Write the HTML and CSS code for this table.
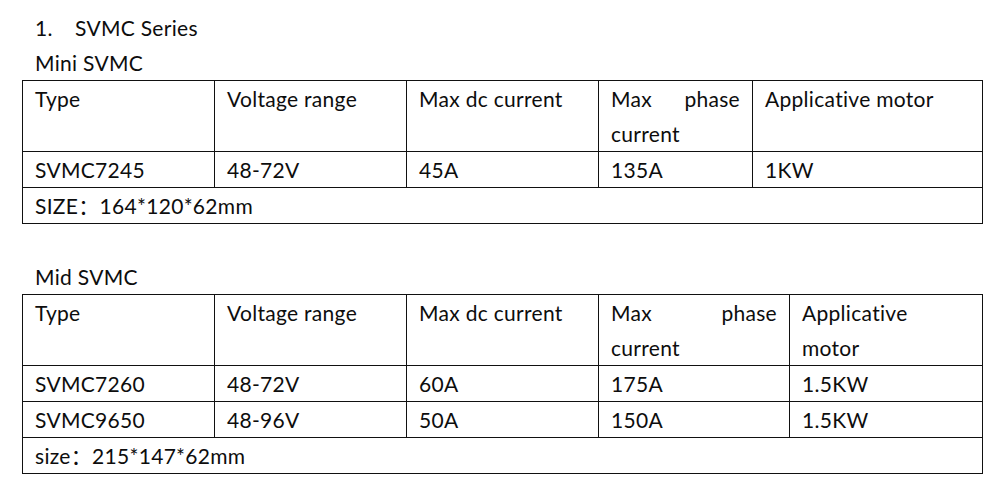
FILE: index.html
```html
<!DOCTYPE html>
<html lang="en">
<head>
    <meta charset="UTF-8">
    <title>SVMC Series</title>
    <link rel="stylesheet" href="styles.css">
</head>
<body>
    <div class="doc">
        <p class="para heading"><span class="num">1.</span>SVMC Series</p>
        <p class="para">Mini SVMC</p>
        <table class="spec">
            <colgroup>
                <col style="width: 192px">
                <col style="width: 192px">
                <col style="width: 192px">
                <col style="width: 154px">
                <col style="width: 230px">
            </colgroup>
            <tr>
                <td>Type</td>
                <td>Voltage range</td>
                <td>Max dc current</td>
                <td class="justify">Max phase current</td>
                <td>Applicative motor</td>
            </tr>
            <tr>
                <td>SVMC7245</td>
                <td>48-72V</td>
                <td>45A</td>
                <td>135A</td>
                <td>1KW</td>
            </tr>
            <tr>
                <td colspan="5">SIZE：164*120*62mm</td>
            </tr>
        </table>

        <p class="para">&nbsp;</p>
        <p class="para">Mid SVMC</p>
        <table class="spec">
            <colgroup>
                <col style="width: 192px">
                <col style="width: 192px">
                <col style="width: 192px">
                <col style="width: 191px">
                <col style="width: 193px">
            </colgroup>
            <tr>
                <td>Type</td>
                <td>Voltage range</td>
                <td>Max dc current</td>
                <td class="justify">Max phase current</td>
                <td>Applicative<br>motor</td>
            </tr>
            <tr>
                <td>SVMC7260</td>
                <td>48-72V</td>
                <td>60A</td>
                <td>175A</td>
                <td>1.5KW</td>
            </tr>
            <tr>
                <td>SVMC9650</td>
                <td>48-96V</td>
                <td>50A</td>
                <td>150A</td>
                <td>1.5KW</td>
            </tr>
            <tr>
                <td colspan="5">size：215*147*62mm</td>
            </tr>
        </table>
    </div>
</body>
</html>
```

FILE: styles.css
```css
* {
    margin: 0;
    padding: 0;
    box-sizing: border-box;
}

body {
    background: #fff;
    color: #0d0d0d;
    font-family: Lato, "Noto Sans CJK SC", sans-serif;
    font-size: 21px;
    letter-spacing: 0.3px;
    line-height: 35px;
}

.doc {
    padding: 10px 0 0 22px;
}

.para {
    padding-left: 13px;
    height: 35px;
}

.heading .num {
    display: inline-block;
    width: 40px;
}

.spec {
    width: 961px;
    border-collapse: collapse;
    table-layout: fixed;
}

.spec td {
    border: 1px solid #111;
    padding: 0 12px;
    height: 36px;
    vertical-align: top;
    text-align: left;
}

.spec td.justify {
    text-align: justify;
}
```
